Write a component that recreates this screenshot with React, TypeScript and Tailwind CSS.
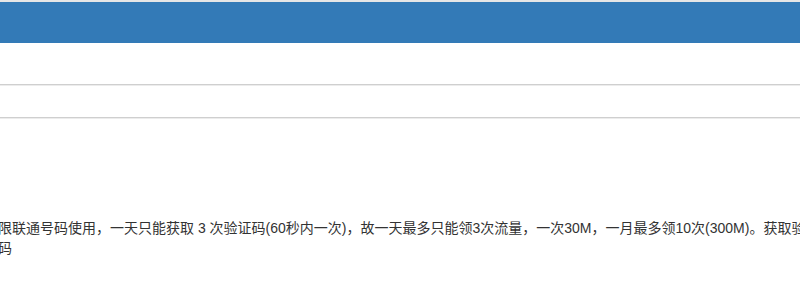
export default function App() {
  return (
    <div className="w-[800px] h-[292px] overflow-hidden bg-white" style={{ fontFamily: '"Liberation Sans", "Noto Sans CJK SC", sans-serif' }}>
      {/* top strip + header bar */}
      <div className="h-[2px] bg-[#e6e6e6]" />
      <div className="h-[41px] bg-[#337ab7]" />

      {/* empty rows */}
      <div className="h-[42px] border-b border-[#cfcfcf] shadow-[0_1px_0_#ececec]" />
      <div className="h-[33px] border-b border-[#cfcfcf] shadow-[0_1px_0_#ececec]" />

      {/* notice */}
      <div className="pt-[100px]">
        <p className="ml-[-2px] w-[830px] text-[14px] leading-[20px] text-[#333333]">
          限联通号码使用，一天只能获取 3 次验证码(60秒内一次)，故一天最多只能领3次流量，一次30M，一月最多领10次(300M)。获取验证码
        </p>
      </div>
    </div>
  );
}
